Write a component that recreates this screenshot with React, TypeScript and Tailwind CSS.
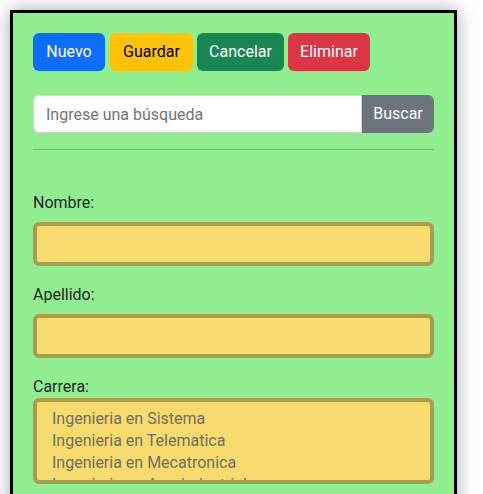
import React from "react";

export default function App() {
  const font = { fontFamily: 'Roboto, "Noto Sans", sans-serif' };
  return (
    <div className="min-h-[494px] bg-white pt-[10px] pl-[10px]" style={font}>
      <div className="w-[447px] h-[500px] border-[3px] border-black bg-[#90ee90] p-[20px] shadow-[0_0_18px_rgba(0,0,0,0.35)] text-[16px] text-[#212529]">
        <div className="flex h-[38px]">
          <button className="w-[72px] h-[38px] rounded-[6px] bg-[#0d6efd] text-white">Nuevo</button>
          <button className="ml-[5px] w-[83px] h-[38px] rounded-[6px] bg-[#ffc107] text-black">Guardar</button>
          <button className="ml-[4px] w-[87px] h-[38px] rounded-[6px] bg-[#198754] text-white">Cancelar</button>
          <button className="ml-[4px] w-[82px] h-[38px] rounded-[6px] bg-[#dc3545] text-white">Eliminar</button>
        </div>
        <div className="mt-[24px] flex h-[38px]">
          <input
            className="flex-1 min-w-0 h-[38px] rounded-l-[6px] border border-[#ced4da] bg-white px-[12px] text-[16px] outline-none placeholder:text-[#6c757d]"
            placeholder="Ingrese una búsqueda"
            style={font}
          />
          <button className="w-[72px] h-[38px] rounded-r-[6px] bg-[#6c757d] text-white">Buscar</button>
        </div>
        <div className="mt-[16px] h-px bg-[#6fb86f]" />
        <div className="mt-[41px] flex flex-col">
          <label className="leading-[24px] mb-[7px]">Nombre:</label>
          <div className="h-[44px] rounded-[6px] border-[4px] border-[#ab9b4e] bg-[#f7db6f]" />
          <label className="mt-[17px] leading-[24px] mb-[7px]">Apellido:</label>
          <div className="h-[44px] rounded-[6px] border-[4px] border-[#ab9b4e] bg-[#f7db6f]" />
          <label className="mt-[17px] leading-[24px] -mb-px">Carrera:</label>
          <div className="h-[86px] rounded-[6px] border-[4px] border-[#ab9b4e] bg-[#f7db6f] overflow-hidden pt-[6px] pl-[15px] text-[#6f6e64]">
            <div className="leading-[22px]">Ingenieria en Sistema</div>
            <div className="leading-[22px]">Ingenieria en Telematica</div>
            <div className="leading-[22px]">Ingenieria en Mecatronica</div>
            <div className="leading-[22px]">Ingenieria en Agroindustrial</div>
          </div>
        </div>
      </div>
    </div>
  );
}
